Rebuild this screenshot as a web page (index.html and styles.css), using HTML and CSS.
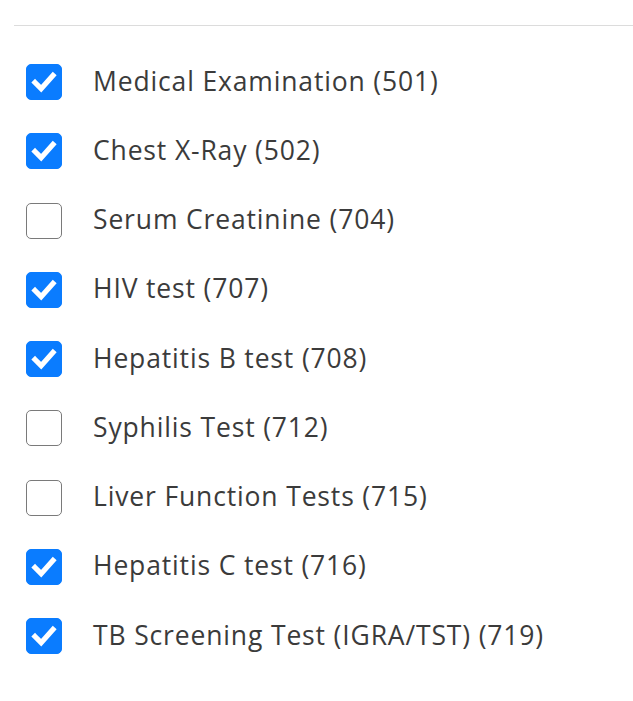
FILE: index.html
```html
<!DOCTYPE html>
<html>
<head>
<meta charset="utf-8">
<link rel="stylesheet" href="styles.css">
</head>
<body>
<div class="page">
  <hr class="divider">
  <ul class="list">
    <li class="item"><span class="box checked"><svg viewBox="0 0 36 36"><path d="M8.5 18.5 L15 25 L27.5 11" /></svg></span><span class="label">Medical Examination (501)</span></li>
    <li class="item"><span class="box checked"><svg viewBox="0 0 36 36"><path d="M8.5 18.5 L15 25 L27.5 11" /></svg></span><span class="label">Chest X-Ray (502)</span></li>
    <li class="item"><span class="box"></span><span class="label">Serum Creatinine (704)</span></li>
    <li class="item"><span class="box checked"><svg viewBox="0 0 36 36"><path d="M8.5 18.5 L15 25 L27.5 11" /></svg></span><span class="label">HIV test (707)</span></li>
    <li class="item"><span class="box checked"><svg viewBox="0 0 36 36"><path d="M8.5 18.5 L15 25 L27.5 11" /></svg></span><span class="label">Hepatitis B test (708)</span></li>
    <li class="item"><span class="box"></span><span class="label">Syphilis Test (712)</span></li>
    <li class="item"><span class="box"></span><span class="label">Liver Function Tests (715)</span></li>
    <li class="item"><span class="box checked"><svg viewBox="0 0 36 36"><path d="M8.5 18.5 L15 25 L27.5 11" /></svg></span><span class="label">Hepatitis C test (716)</span></li>
    <li class="item"><span class="box checked"><svg viewBox="0 0 36 36"><path d="M8.5 18.5 L15 25 L27.5 11" /></svg></span><span class="label">TB Screening Test (IGRA/TST) (719)</span></li>
  </ul>
</div>
</body>
</html>
```
FILE: styles.css
```css
html, body {
  margin: 0;
  padding: 0;
  background: #ffffff;
}
.page {
  padding-top: 25px;
  font-family: "Open Sans", "DejaVu Sans", sans-serif;
  color: #3b3b3b;
}
.divider {
  margin: 0 0 0 14px;
  border: 0;
  border-top: 1px solid #dcdcdc;
  height: 0;
}
.list {
  list-style: none;
  margin: 38px 0 0 0;
  padding: 0 0 0 26px;
}
.item {
  display: flex;
  align-items: center;
  height: 36px;
  margin-bottom: 33.25px;
}
.box {
  flex: none;
  width: 36px;
  height: 36px;
  box-sizing: border-box;
  border: 1.5px solid #7a7a7a;
  border-radius: 5px;
  background: #fff;
  display: flex;
}
.box.checked {
  background: #0a7cff;
  border-color: #0a7cff;
}
.box svg {
  width: 100%;
  height: 100%;
}
.box svg path {
  fill: none;
  stroke: #ffffff;
  stroke-width: 5.5;
  stroke-linecap: square;
  stroke-linejoin: miter;
}
.label {
  margin-left: 31px;
  padding-bottom: 3px;
  font-size: 26.5px;
  line-height: 36px;
  font-weight: 500;
  letter-spacing: 0.85px;
}
```
